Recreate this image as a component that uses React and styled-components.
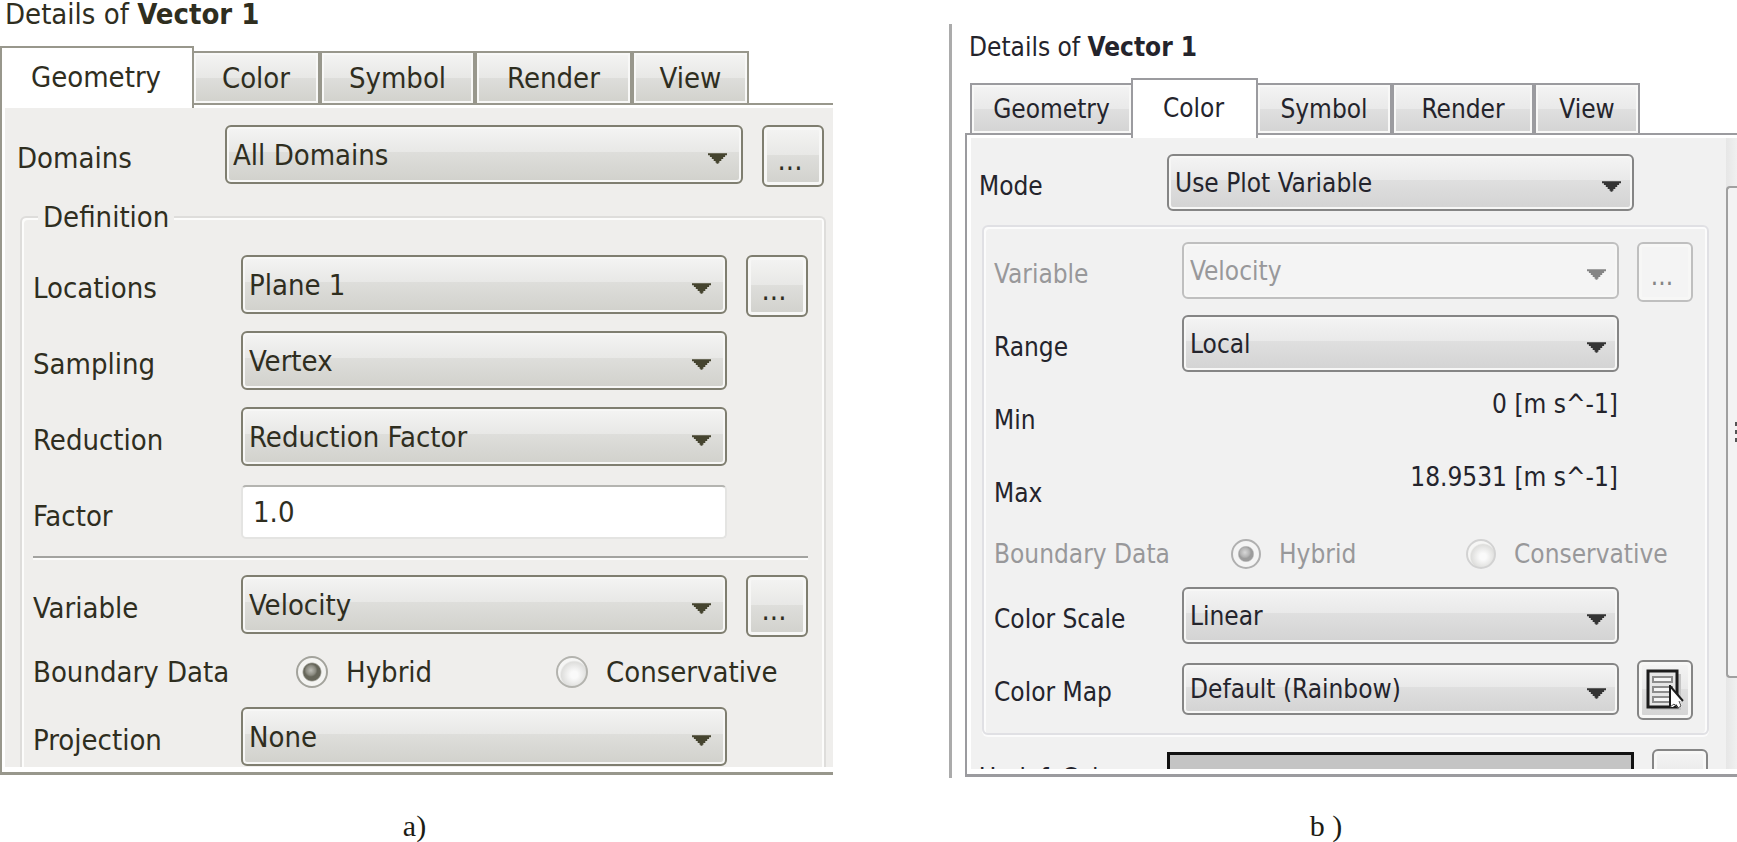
import React, { useState } from "react";
import styled, { ThemeProvider, createGlobalStyle } from "styled-components";

const olive = {
  font: "29px",
  text: "#2f2e1f",
  muted: "#8d8d86",
  line: "#98978c",
  border: "#7f7e70",
  arrow: "#45442f",
  panel: "#efeeec",
  etch: "#dedddb",
  top: "#f4f4f3",
  mid: "#e8e8e6",
  low: "#dededb",
  end: "#d1d1cc",
  tabHeight: "54px",
  activeTabHeight: "62px",
  labelWidth: "191px",
  labelIndent: "2px",
  gap: "19px",
  rowGap: "14px",
  rowHeight: "62px",
  controlHeight: "59px",
  buttonWidth: "62px",
  arrowRight: "16px",
  radioRow: "42px",
  radioSize: "32px",
  radioStart: "55px",
  radioPitch: "260px",
};

const gray = {
  font: "26px",
  text: "#24242c",
  muted: "#98989a",
  line: "#9b9b9f",
  border: "#858585",
  arrow: "#343434",
  panel: "#f1f1f1",
  etch: "#e0e0e4",
  top: "#f4f4f4",
  mid: "#e9e9e9",
  low: "#dfdfdf",
  end: "#d3d3d3",
  tabHeight: "52px",
  activeTabHeight: "60px",
  labelWidth: "170px",
  labelIndent: "0",
  gap: "18px",
  rowGap: "13px",
  rowHeight: "60px",
  controlHeight: "57px",
  buttonWidth: "56px",
  arrowRight: "13px",
  radioRow: "40px",
  radioSize: "30px",
  radioStart: "49px",
  radioPitch: "235px",
};

const geometryTabs = [
  { name: "Geometry", width: 194 },
  { name: "Color", width: 128 },
  { name: "Symbol", width: 155 },
  { name: "Render", width: 157 },
  { name: "View", width: 117 },
];

const colorTabs = [
  { name: "Geometry", width: 163 },
  { name: "Color", width: 127 },
  { name: "Symbol", width: 136 },
  { name: "Render", width: 142 },
  { name: "View", width: 106 },
];

function Dropdown({ id, value, disabled, compact }) {
  return (
    <SelectWrap $compact={compact}>
      <Select id={id} defaultValue={value} disabled={disabled}>
        <option>{value}</option>
      </Select>
      <Arrow viewBox="0 0 20 11" $disabled={disabled} aria-hidden="true">
        <path d="M0 0h20v2h-2v2h-2v2h-2v2h-2v2h-1v1H9v-1H8V8H6V6H4V4H2V2H0z" />
      </Arrow>
    </SelectWrap>
  );
}

function SelectRow({ id, label, value, disabled, more, compact, children }) {
  return (
    <Row>
      <Label htmlFor={id} $disabled={disabled}>
        {label}
      </Label>
      <Dropdown id={id} value={value} disabled={disabled} compact={compact} />
      {more && (
        <SquareButton type="button" disabled={disabled} aria-label={`More ${label}`}>
          ...
        </SquareButton>
      )}
      {children}
    </Row>
  );
}

function BoundaryData({ name, disabled }) {
  const [value, setValue] = useState("Hybrid");

  return (
    <RadioRow role="radiogroup" aria-label="Boundary Data">
      <RowText $disabled={disabled}>Boundary Data</RowText>
      <RadioGroup>
        {["Hybrid", "Conservative"].map((option) => (
          <RadioLabel key={option} $disabled={disabled}>
            <Radio
              type="radio"
              name={name}
              checked={value === option}
              disabled={disabled}
              onChange={() => setValue(option)}
            />
            {option}
          </RadioLabel>
        ))}
      </RadioGroup>
    </RadioRow>
  );
}

function Tabs({ tabs, active, inset }) {
  return (
    <TabBar $inset={inset}>
      {tabs.map((tab) => (
        <Tab key={tab.name} type="button" $width={tab.width} $active={tab.name === active}>
          {tab.name}
        </Tab>
      ))}
    </TabBar>
  );
}

function ColorMapIcon() {
  return (
    <MapIcon viewBox="0 0 38 42" aria-hidden="true">
      <path d="M5 5h30v36H5z" fill="#c4c4c4" />
      <path d="M2 2h29v36H2z" fill="#e6e6e6" stroke="#1c1c1c" strokeWidth="3" />
      <g fill="#f6f6f6" stroke="#8c8c8c" strokeWidth="2">
        <path d="M7 8h19v5H7z" />
        <path d="M7 18h19v5H7z" />
        <path d="M7 28h19v5H7z" />
      </g>
      <path d="M24 17v21h3l3-3 3 4 3-2-2-5h4z" fill="#fff" />
      <path d="M24 16v22M24 17l13 15" fill="none" stroke="#1c1c1c" strokeWidth="2" />
      <path d="M24 38l4-3 4 4 3-2-2-5" fill="none" stroke="#4a4a4a" strokeWidth="1" />
    </MapIcon>
  );
}

function GeometryPanel() {
  return (
    <section>
      <Title>
        Details of <b>Vector 1</b>
      </Title>
      <Tabs tabs={geometryTabs} active="Geometry" />
      <Body>
        <Content>
          <TopRow>
            <SelectRow id="domains" label="Domains" value="All Domains" more />
          </TopRow>
          <Definition>
            <Legend>Definition</Legend>
            <Rows>
              <SelectRow id="locations" label="Locations" value="Plane 1" more />
              <SelectRow id="sampling" label="Sampling" value="Vertex" />
              <SelectRow id="reduction" label="Reduction" value="Reduction Factor" />
              <Row>
                <Label htmlFor="factor">Factor</Label>
                <TextInput id="factor" type="text" defaultValue="1.0" />
              </Row>
            </Rows>
            <Divider />
            <Rows>
              <SelectRow id="variable" label="Variable" value="Velocity" more />
              <BoundaryData name="geometry-boundary" />
              <SelectRow id="projection" label="Projection" value="None" />
            </Rows>
          </Definition>
        </Content>
      </Body>
    </section>
  );
}

function ColorPanel() {
  return (
    <DockedPanel>
      <Title $inset>
        Details of <b>Vector 1</b>
      </Title>
      <Tabs tabs={colorTabs} active="Color" inset />
      <Body $wide>
        <ScrollView>
          <ColorContent>
            <TopRow $wide>
              <SelectRow id="mode" label="Mode" value="Use Plot Variable" />
            </TopRow>
            <Group>
              <Rows>
                <SelectRow id="plot-variable" label="Variable" value="Velocity" disabled more />
                <SelectRow id="range" label="Range" value="Local" />
                <Row>
                  <Label htmlFor="min">Min</Label>
                  <Value id="min">0 [m s^-1]</Value>
                </Row>
                <Row>
                  <Label htmlFor="max">Max</Label>
                  <Value id="max">18.9531 [m s^-1]</Value>
                </Row>
                <BoundaryData name="color-boundary" disabled />
                <SelectRow id="scale" label="Color Scale" value="Linear" />
                <SelectRow id="map" label="Color Map" value="Default (Rainbow)" compact>
                  <SquareButton type="button" $icon aria-label="Edit color map">
                    <ColorMapIcon />
                  </SquareButton>
                </SelectRow>
              </Rows>
            </Group>
            <TopRow $wide>
              <Row>
                <RowText $low>Undef. Color</RowText>
                <Swatch type="button" aria-label="Undefined color" />
                <SwatchMore type="button" aria-label="Choose undefined color" />
              </Row>
            </TopRow>
          </ColorContent>
          <ScrollTrack>
            <ScrollThumb>
              <Grip />
            </ScrollThumb>
          </ScrollTrack>
        </ScrollView>
      </Body>
    </DockedPanel>
  );
}

export default function App() {
  return (
    <>
      <GlobalStyle />
      <Page>
        <ThemeProvider theme={olive}>
          <GeometryPanel />
        </ThemeProvider>
        <ThemeProvider theme={gray}>
          <ColorPanel />
        </ThemeProvider>
        <Caption>a)</Caption>
        <Caption $shifted>b )</Caption>
      </Page>
    </>
  );
}

const GlobalStyle = createGlobalStyle`
  * {
    box-sizing: border-box;
  }

  body {
    margin: 0;
    background: #fff;
    overflow-x: hidden;
  }

  button,
  input,
  select {
    margin: 0;
    font: inherit;
    color: inherit;
  }
`;

const Page = styled.main`
  display: grid;
  grid-template-columns: minmax(0, 833fr) minmax(0, 788fr);
  column-gap: 116px;
  row-gap: 32px;
  font-family: "DejaVu Sans Condensed", "DejaVu Sans", "Noto Sans", sans-serif;
  line-height: 28px;
`;

const DockedPanel = styled.section`
  margin-top: 24px;
  padding: 9px 0 1px 13px;
  border-left: 3px solid #ababab;
`;

const Title = styled.h1`
  margin: 0;
  padding: ${(props) => (props.$inset ? "0 0 17px 4px" : "0 0 18px 5px")};
  color: ${(props) => props.theme.text};
  font-size: ${(props) => props.theme.font};
  font-weight: 400;
  line-height: 28px;
`;

const TabBar = styled.nav`
  display: flex;
  align-items: flex-start;
  margin-bottom: -5px;
  padding-left: ${(props) => (props.$inset ? "5px" : "0")};
  position: relative;
  color: ${(props) => props.theme.text};
  font-size: ${(props) => props.theme.font};
`;

const Tab = styled.button`
  flex: 0 1 ${(props) => props.$width}px;
  height: ${(props) => (props.$active ? props.theme.activeTabHeight : props.theme.tabHeight)};
  margin: ${(props) => (props.$active ? "0 -2px" : "5px 0 0")};
  padding: 0;
  border: 2px solid ${(props) => props.theme.line};
  background: linear-gradient(
    ${(props) => props.theme.top},
    ${(props) => props.theme.mid} 50%,
    ${(props) => props.theme.low} 50%,
    ${(props) => props.theme.end}
  );
  box-shadow: inset 0 0 0 2px #f8f8f7;

  ${(props) =>
    props.$active &&
    `
    z-index: 1;
    padding: 0 2px 3px 0;
    border-bottom: 0;
    background: #fff;
    box-shadow: none;
  `}

  &:first-child {
    margin-left: 0;
  }
`;

const Body = styled.div`
  padding: ${(props) => (props.$wide ? "3px 0 5px 4px" : "3px 0 5px 3px")};
  border: solid ${(props) => props.theme.line};
  border-width: 2px 0 3px 2px;
  background: #fff;
  color: ${(props) => props.theme.text};
  font-size: ${(props) => props.theme.font};
`;

const Content = styled.div`
  background: ${(props) => props.theme.panel};
  padding-top: 17px;
`;

const ScrollView = styled.div`
  display: grid;
  grid-template-columns: minmax(0, 1fr) 11px;
  height: 631px;
  overflow: hidden;
`;

const ColorContent = styled.div`
  padding-top: 16px;
  background: ${(props) => props.theme.panel};
`;

const TopRow = styled.div`
  padding: ${(props) => (props.$wide ? "0 18px 0 8px" : "0 9px 0 10px")};
`;

const Row = styled.div`
  display: grid;
  grid-template-columns: ${(props) => props.theme.labelWidth} minmax(0, 1fr) ${(props) =>
      props.theme.buttonWidth};
  column-gap: ${(props) => props.theme.gap};
  align-items: start;
  height: ${(props) => props.theme.rowHeight};
`;

const RadioRow = styled(Row)`
  grid-template-columns: ${(props) => props.theme.labelWidth} minmax(0, 1fr);
  align-items: center;
  height: ${(props) => props.theme.radioRow};
`;

const Rows = styled.div`
  display: grid;
  row-gap: ${(props) => props.theme.rowGap};
`;

const Label = styled.label`
  align-self: center;
  padding: 3px 0 0 ${(props) => props.theme.labelIndent};
  color: ${(props) => (props.$disabled ? props.theme.muted : props.theme.text)};
  white-space: nowrap;
`;

const RowText = styled.span`
  align-self: center;
  padding-top: ${(props) => (props.$low ? "1px" : "0")};
  padding-left: ${(props) => props.theme.labelIndent};
  color: ${(props) => (props.$disabled ? props.theme.muted : props.theme.text)};
  white-space: nowrap;
`;

const Definition = styled.fieldset`
  min-width: 0;
  margin: 14px 7px 0 15px;
  padding: 22px 16px 0 9px;
  border: 2px solid ${(props) => props.theme.etch};
  border-bottom: 0;
  border-radius: 6px 6px 0 0;
  box-shadow: inset 2px 2px 0 #fcfcfb, inset -2px 0 0 #fcfcfb;

  ${Rows}:last-child {
    margin-bottom: -2px;
  }
`;

const Legend = styled.legend`
  margin-left: 7px;
  padding: 0 5px;
  background: ${(props) => props.theme.panel};
  line-height: 32px;
`;

const Group = styled.div`
  margin: 11px 17px 11px 11px;
  padding: 15px 14px 13px 10px;
  border: 2px solid ${(props) => props.theme.etch};
  border-radius: 6px;
  box-shadow: inset 2px 2px 0 #fbfbfb, inset -2px 0 0 #fbfbfb, 0 2px 0 #fbfbfb;
`;

const Divider = styled.hr`
  height: 4px;
  margin: 11px 0 15px 2px;
  border: 0;
  border-top: 2px solid #a3a3a0;
  background: #fcfcfb;
`;

const SelectWrap = styled.div`
  position: relative;
  height: ${(props) => (props.$compact ? "52px" : props.theme.controlHeight)};
  margin-top: ${(props) => (props.$compact ? "3px" : "0")};
`;

const Select = styled.select`
  appearance: none;
  display: block;
  width: 100%;
  height: 100%;
  padding: 0 40px 0 6px;
  border: 2px solid ${(props) => props.theme.border};
  border-radius: 6px;
  background: linear-gradient(
    ${(props) => props.theme.top},
    ${(props) => props.theme.mid} 46%,
    ${(props) => props.theme.low} 46%,
    ${(props) => props.theme.end}
  );
  box-shadow: inset 0 0 0 2px #f7f7f6;
  line-height: 36px;

  &:disabled {
    border-color: #bfbfbf;
    background: #f4f4f4;
    color: ${(props) => props.theme.muted};
    opacity: 1;
  }
`;

/* sits over the select, which keeps the clicks */
const Arrow = styled.svg`
  position: absolute;
  top: 48%;
  right: ${(props) => props.theme.arrowRight};
  width: 19px;
  height: 11px;
  fill: ${(props) => (props.$disabled ? "#858585" : props.theme.arrow)};
  pointer-events: none;
`;

const SquareButton = styled.button`
  display: flex;
  align-items: center;
  justify-content: center;
  height: ${(props) => props.theme.rowHeight};
  padding: ${(props) => (props.$icon ? "0" : "7px 6px 0 0")};
  border: 2px solid ${(props) => props.theme.border};
  border-radius: 6px;
  background: linear-gradient(
    ${(props) => props.theme.top},
    ${(props) => props.theme.mid} 48%,
    ${(props) => props.theme.low} 48%,
    ${(props) => props.theme.end}
  );
  box-shadow: inset 0 0 0 3px #f7f7f6;

  &:disabled {
    border-color: #bfbfbf;
    background: #f4f4f4;
    color: #858585;
  }
`;

const TextInput = styled.input`
  width: 100%;
  height: 54px;
  margin-top: 2px;
  padding: 0 10px;
  border: 2px solid #e4e4e2;
  border-top-color: #b4b4b0;
  border-radius: 5px;
  background: #fff;
`;

const RadioGroup = styled.div`
  display: grid;
  grid-template-columns: ${(props) => props.theme.radioPitch} 1fr;
  padding-left: ${(props) => props.theme.radioStart};
`;

const RadioLabel = styled.label`
  display: flex;
  align-items: center;
  gap: 18px;
  color: ${(props) => (props.$disabled ? props.theme.muted : props.theme.text)};
`;

const Radio = styled.input`
  appearance: none;
  flex: none;
  width: ${(props) => props.theme.radioSize};
  height: ${(props) => props.theme.radioSize};
  border: 2px solid #b3b3ae;
  border-radius: 50%;
  background: radial-gradient(circle at 58% 60%, #fafafa 0 15%, #dededc 55%, #f6f6f5 62%);

  &:checked {
    border-color: #a3a39c;
    background: radial-gradient(circle at 46% 44%, #bdbdb6 0, #8a8a80 22%, transparent 30%),
      radial-gradient(circle, #66665a 0 42%, #f4f4f2 50%);
  }

  &:disabled {
    border-color: #d2d2d2;
  }

  &:disabled:checked {
    border-color: #b0b0b0;
    background: radial-gradient(circle at 46% 44%, #d8d8d8 0, #b4b4b4 22%, transparent 30%),
      radial-gradient(circle, #9c9c9c 0 38%, #f4f4f4 46%);
  }
`;

const Value = styled.output`
  padding-right: 1px;
  line-height: 32px;
  text-align: right;
  white-space: nowrap;
`;

const MapIcon = styled.svg`
  width: 38px;
  height: 42px;
`;

const Swatch = styled.button`
  height: 48px;
  margin-top: 6px;
  border: 3px solid #111;
  background: #c4c4c4;
`;

const SwatchMore = styled(SquareButton)`
  margin-top: 3px;
`;

const ScrollTrack = styled.div`
  padding-top: 48px;
  background: linear-gradient(90deg, #e6e6e6, #f0f0f0);
`;

const ScrollThumb = styled.div`
  display: flex;
  align-items: center;
  justify-content: flex-end;
  height: 492px;
  border: 2px solid #a0a0a0;
  border-right: 0;
  border-radius: 4px 0 0 4px;
  background: #f3f3f3;
`;

const Grip = styled.div`
  width: 2px;
  height: 20px;
  background: repeating-linear-gradient(#555 0 4px, #f3f3f3 4px 8px);
`;

const Caption = styled.p`
  margin: 0;
  padding-right: ${(props) => (props.$shifted ? "34px" : "4px")};
  color: #1c1c14;
  font-family: "Liberation Serif", serif;
  font-size: 30px;
  line-height: 32px;
  text-align: center;
`;
